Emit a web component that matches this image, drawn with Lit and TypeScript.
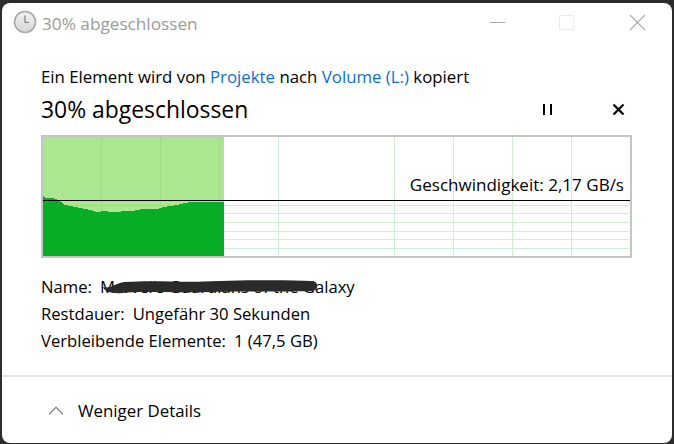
import { LitElement, html, css, svg } from "lit";
import { customElement } from "lit/decorators.js";

const W = 587, H = 119, OX = 43, OY = 137;
const vLines = [101, 160, 219, 278, 394, 453, 512, 571];
const hLines = [205, 213, 222, 231, 239, 248];
const curve: [number, number][] = [
  [43,196],[45,198],[52,198],[56,199],[61,202],[65,205],[70,206],[75,207],[80,208],[90,210],[97,212],[105,211],[110,212],[132,211],[143,209],[157,209],[163,207],[177,205],[190,202],[224,202]
];

function areaPoints() {
  let p = `0,${H} `;
  for (const [x, y] of curve) {
    p += `${x - OX},${y - OY} `;
  }
  p += `181,${H}`;
  return p;
}

@customElement("app-root")
export class AppRoot extends LitElement {
  static styles = css`
    :host {
      display: block;
      width: 674px;
      height: 444px;
      background: #2c2c2c;
      box-sizing: border-box;
      padding: 3px 2px 1px 2px;
      font-family: "Open Sans", "Noto Sans", sans-serif;
      color: #000;
      overflow: hidden;
    }
    .win {
      height: 440px;
      background: #fff;
      border-radius: 8px;
      display: flex;
      flex-direction: column;
      overflow: hidden;
    }
    .titlebar {
      height: 40px;
      display: flex;
      align-items: center;
      padding-left: 11px;
      flex: none;
    }
    .clock { width: 24px; height: 24px; flex: none; margin-right: 5px; margin-bottom: 2px; }
    .wintitle {
      font-size: 17.2px;
      color: #9b9b9b;
      flex: 1;
      white-space: nowrap;
    }
    .controls { display: flex; align-items: center; }
    .controls svg { display: block; }
    .content { padding: 24px 40px 0 39px; flex: 1; }
    .line1 { font-size: 16.82px; line-height: 20px; height: 20px; white-space: nowrap; }
    .line1 a { color: #0c6fd0; text-decoration: none; }
    .headrow {
      display: flex;
      align-items: center;
      height: 31px;
      margin-top: 7px;
    }
    .heading { font-size: 22.9px; flex: 1; white-space: nowrap; }
    .headbtns { display: flex; gap: 59px; align-items: center; margin-right: 7px; }
    .headbtns svg { display: block; }
    .chart {
      position: relative;
      width: ${W}px;
      height: ${H}px;
      border: 2px solid #c4c4c4;
      margin-top: 10px;
    }
    .chart svg { display: block; position: absolute; left: 0; top: 0; }
    .speed {
      position: absolute;
      right: 6px;
      top: 38px;
      font-size: 17.05px;
      line-height: 20px;
      white-space: nowrap;
    }
    .info { margin-top: 15px; font-size: 16.65px; line-height: 27px; position: relative; }
    .row { display: flex; gap: 8px; white-space: nowrap; height: 27px; }
    .scribble { position: absolute; left: 59px; top: 4px; pointer-events: none; }
    .footer {
      height: 68px;
      flex: none;
      border-top: 2px solid #e4e4e4;
      display: flex;
      align-items: center;
      padding-left: 46px;
      box-sizing: border-box;
    }
    .footer svg { margin-right: 14px; display: block; }
    .footer span { font-size: 16.85px; }
  `;

  render() {
    return html`
      <div class="win">
        <div class="titlebar">
          <svg class="clock" viewBox="0 0 24 24">
            <defs>
              <linearGradient id="cg" x1="0" y1="0" x2="0" y2="1">
                <stop offset="0" stop-color="#f2f2f2" />
                <stop offset="1" stop-color="#d6d6d6" />
              </linearGradient>
            </defs>
            <circle cx="12" cy="12" r="10.5" fill="url(#cg)" stroke="#a8a8a8" stroke-width="1.6" />
            <path d="M12 5.5V12.5H16" fill="none" stroke="#7d7d7d" stroke-width="1.2" />
          </svg>
          <div class="wintitle">30% abgeschlossen</div>
          <div class="controls">
            <svg width="205" height="40" viewBox="0 0 205 40" shape-rendering="crispEdges">
              <path d="M23 19.5H38" stroke="#a9a9a9" stroke-width="1" />
              <rect x="92.5" y="12.5" width="14" height="14" rx="1.5" fill="none" stroke="#ececec" stroke-width="1.4" />
              <path d="M163 12L178 27M178 12L163 27" stroke="#b0b0b0" stroke-width="1.2" fill="none" shape-rendering="auto" />
            </svg>
          </div>
        </div>
        <div class="content">
          <div class="line1">Ein Element wird von <a>Projekte</a> nach <a>Volume (L:)</a> kopiert</div>
          <div class="headrow">
            <div class="heading">30% abgeschlossen</div>
            <div class="headbtns">
              <svg width="12" height="12" viewBox="0 0 12 12" shape-rendering="crispEdges"><path d="M2 0h2v11H2zM9 0h2v11H9z" fill="#000" /></svg>
              <svg width="13" height="13" viewBox="0 0 13 13"><path d="M1.5 1.5L11.5 11.5M11.5 1.5L1.5 11.5" stroke="#000" stroke-width="2.2" fill="none" /></svg>
            </div>
          </div>
          <div class="chart">
            <svg width=${W} height=${H} viewBox="0 0 ${W} ${H}" shape-rendering="crispEdges">
              <rect x="0" y="0" width="181" height=${H} fill="#abe690" />
              ${vLines.map((x) => svg`<rect x=${x - OX} y="0" width="1" height=${H} fill=${x < 224 ? "#9cdc84" : "#cdf0d3"} />`)}
              ${hLines.map((y) => svg`<rect x="0" y=${y - OY} width=${W - 1} height="1" fill="#cdf0d3" />`)}
              <rect x="0" y=${205 - OY} width="181" height="1" fill="#9cdc84" />
              <polygon points=${areaPoints()} fill="#06ae26" />
              <rect x="0" y=${200 - OY} width=${W} height="1" fill="#000" />
            </svg>
            <div class="speed">Geschwindigkeit: 2,17 GB/s</div>
          </div>
          <div class="info">
            <div class="row"><span>Name:</span><span>Marvel's Guardians of the Galaxy</span></div>
            <div class="row"><span>Restdauer:</span><span>Ungefähr 30 Sekunden</span></div>
            <div class="row"><span>Verbleibende Elemente:</span><span>1 (47,5 GB)</span></div>
            <svg class="scribble" width="224" height="20" viewBox="0 0 224 20">
              <path d="M3 10C10 12 14 7 24 5C60 3 80 6 120 4C160 3 190 3 212 4C219 4 219 14 212 14C170 15 150 14 110 15C70 16 40 14 22 16C12 17 4 14 3 10Z" fill="#2a2a2a" />
            </svg>
          </div>
        </div>
        <div class="footer">
          <svg width="16" height="9" viewBox="0 0 16 9"><path d="M1 8.5L8 1.2L15 8.5" fill="none" stroke="#8a8a8a" stroke-width="1.3" /></svg>
          <span>Weniger Details</span>
        </div>
      </div>
    `;
  }
}
